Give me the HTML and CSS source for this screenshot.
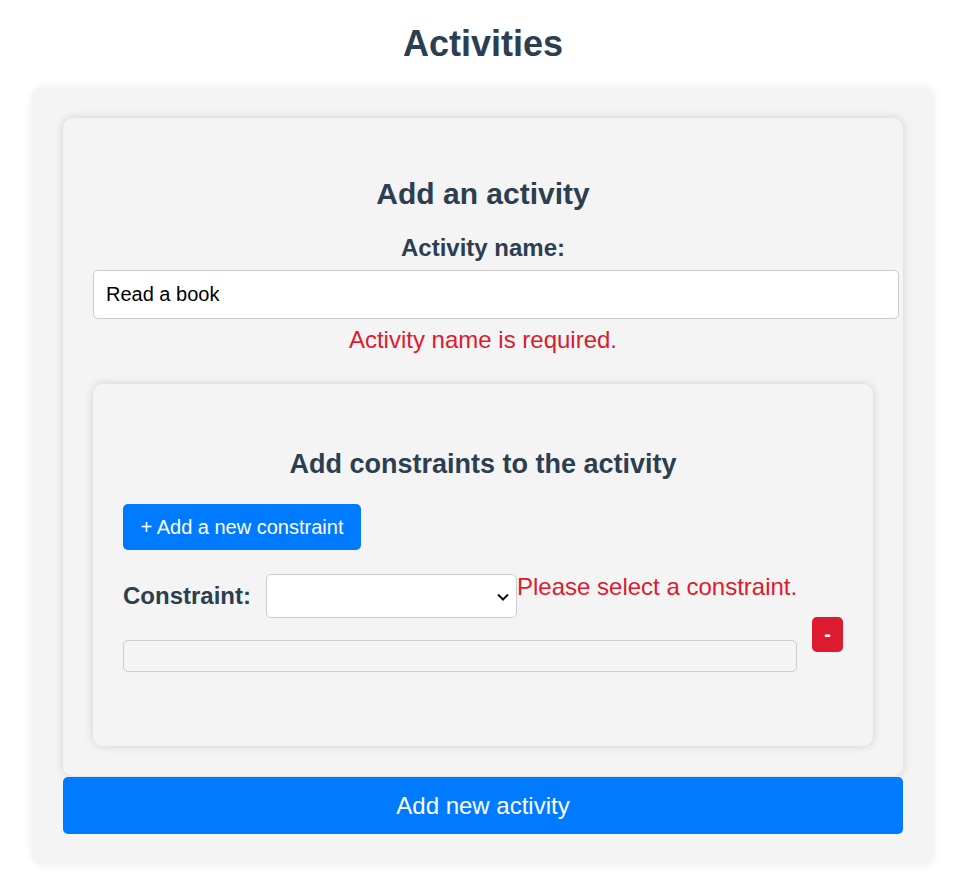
FILE: index.html
```html
<!DOCTYPE html>
<html lang="en">
<head>
<meta charset="utf-8">
<title>Activities</title>
<link rel="stylesheet" href="styles.css">
</head>
<body>
  <h1 class="page-title">Activities</h1>
  <div class="container">
    <form class="activity-form">
      <h2 class="form-title">Add an activity</h2>
      <label class="field-label" for="name">Activity name:</label>
      <input class="text-input" id="name" type="text" value="Read a book">
      <div class="error error-center">Activity name is required.</div>

      <div class="constraints-card">
        <h3 class="constraints-title">Add constraints to the activity</h3>
        <button type="button" class="btn-add-constraint">+ Add a new constraint</button>
        <div class="constraint-row">
          <label class="constraint-label">Constraint:</label>
          <span class="select-wrap">
            <select class="constraint-select"><option></option></select>
            <svg class="select-chevron" width="12" height="8" viewBox="0 0 12 8" aria-hidden="true">
              <path d="M1 1.5 L6 6.5 L11 1.5" fill="none" stroke="#111" stroke-width="2"/>
            </svg>
          </span>
          <span class="error error-inline">Please select a constraint.</span>
        </div>
        <div class="constraint-value-row">
          <input class="value-input" type="text" disabled>
          <button type="button" class="btn-remove">-</button>
        </div>
      </div>
    </form>
    <button type="button" class="btn-submit">Add new activity</button>
  </div>
</body>
</html>
```

FILE: styles.css
```css
* { box-sizing: border-box; }

body {
  margin: 0;
  padding: 0 4px 0 0;
  background: #ffffff;
  font-family: "Liberation Sans", Arial, sans-serif;
  color: #2c3e50;
}

.page-title {
  margin: 23px 0 24px;
  text-align: center;
  font-size: 36px;
  line-height: 41px;
  font-weight: bold;
  color: #2c3e50;
}

.container {
  width: 900px;
  margin: 0 auto 25px;
  padding: 30px;
  background: #f4f4f4;
  border-radius: 10px;
  box-shadow: 0 0 10px rgba(0, 0, 0, 0.1);
}

.activity-form {
  display: flex;
  flex-direction: column;
  align-items: center;
  padding: 30px;
  background: #f4f4f4;
  border-radius: 10px;
  box-shadow: 0 0 10px rgba(0, 0, 0, 0.15);
}

.form-title {
  margin: 29px 0 23px;
  font-size: 30px;
  line-height: 34px;
  font-weight: bold;
  color: #2c3e50;
}

.field-label {
  font-size: 24px;
  line-height: 28px;
  font-weight: bold;
  margin-bottom: 8px;
}

.text-input {
  align-self: flex-start;
  width: calc(100% + 26px);
  height: 49px;
  padding: 0 12px;
  border: 1px solid #cccccc;
  border-radius: 5px;
  background: #ffffff;
  font-family: "Liberation Sans", Arial, sans-serif;
  font-size: 20px;
  color: #000000;
}

.error {
  color: #dc1a30;
  font-size: 24px;
  line-height: 28px;
}

.error-center {
  margin-top: 7px;
  margin-bottom: 30px;
}

.constraints-card {
  align-self: stretch;
  padding: 65px 30px 74px;
  background: #f4f4f4;
  border-radius: 10px;
  box-shadow: 0 0 10px rgba(0, 0, 0, 0.15);
}

.constraints-title {
  margin: 0 0 24px;
  text-align: center;
  font-size: 27px;
  line-height: 31px;
  font-weight: bold;
  color: #2c3e50;
}

.btn-add-constraint {
  display: block;
  width: 238px;
  height: 46px;
  padding: 0;
  border: none;
  border-radius: 5px;
  background: #007bff;
  color: #ffffff;
  font-family: "Liberation Sans", Arial, sans-serif;
  font-size: 20px;
  margin-bottom: 24px;
}

.constraint-row {
  display: flex;
  align-items: center;
}

.constraint-label {
  font-size: 24px;
  line-height: 28px;
  font-weight: bold;
  margin-right: 15px;
}

.select-wrap {
  position: relative;
  display: block;
  width: 251px;
  height: 44px;
}

.constraint-select {
  display: block;
  width: 100%;
  height: 100%;
  border: 1px solid #cccccc;
  border-radius: 5px;
  background: #ffffff;
  font-size: 20px;
  -webkit-appearance: none;
  appearance: none;
}

.select-chevron {
  position: absolute;
  right: 8px;
  top: 19px;
  pointer-events: none;
}

.error-inline {
  align-self: flex-start;
  margin-top: -1px;
}

.constraint-value-row {
  display: flex;
  align-items: flex-start;
  gap: 15px;
}

.value-input {
  flex: 1;
  height: 32px;
  margin-top: 22px;
  border: 1px solid #cccccc;
  border-radius: 5px;
  background: #f4f4f4;
}

.btn-remove {
  width: 31px;
  height: 35px;
  margin-top: -1px;
  padding: 0;
  border: none;
  border-radius: 5px;
  background: #dc1a30;
  color: #ffffff;
  font-family: "Liberation Sans", Arial, sans-serif;
  font-size: 20px;
  font-weight: bold;
}

.btn-submit {
  display: block;
  width: 100%;
  height: 57px;
  margin-top: 1px;
  padding: 0;
  border: none;
  border-radius: 5px;
  background: #007bff;
  color: #ffffff;
  font-family: "Liberation Sans", Arial, sans-serif;
  font-size: 24px;
}
```
